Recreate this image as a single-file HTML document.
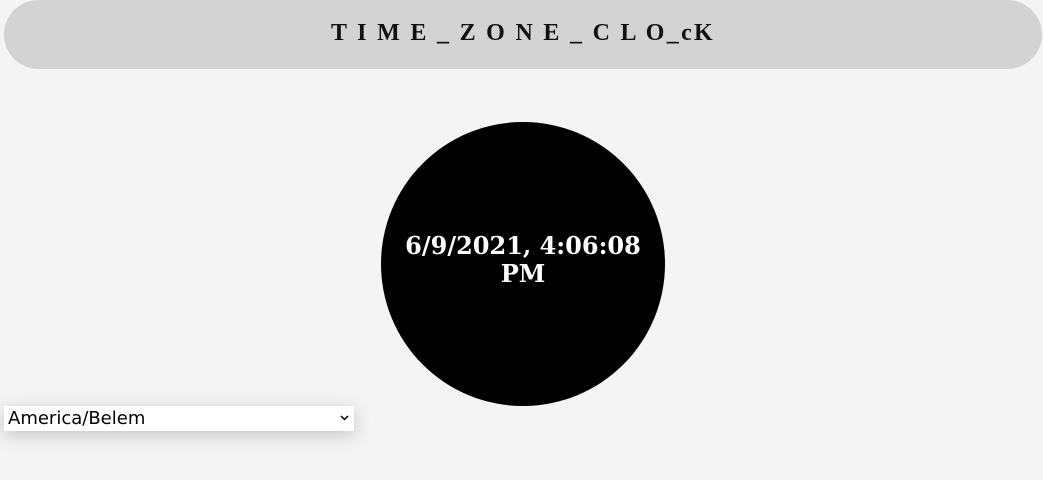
<!DOCTYPE html>
<html><head><style>
html,body{margin:0;padding:0;background:#f4f4f4;width:1043px;height:480px;overflow:hidden}
.hdr{position:absolute;left:4px;top:0;width:1038px;height:69px;border-radius:35px;background:#d3d3d3;text-align:center;line-height:66px;font-family:"Liberation Serif","DejaVu Serif",serif;font-weight:bold;font-size:24px;letter-spacing:2.3px;color:#111;white-space:pre}
.circ{position:absolute;left:381px;top:122px;width:284px;height:284px;border-radius:50%;background:#000;color:#fff;font-family:"DejaVu Serif",serif;font-weight:bold;font-size:24px;text-align:center;box-sizing:border-box;padding-top:110px;line-height:28px}
.sel{position:absolute;left:4px;top:406px;width:350px;height:25px;background:#fff;box-shadow:0 4px 18px rgba(0,0,0,.2);font-family:"DejaVu Sans",sans-serif;font-size:18px;line-height:26px;color:#000}
.sel span{position:absolute;left:4px;top:0}
.sel svg{position:absolute;right:5px;top:9px}
</style></head><body>
<div class="hdr">T I M E _ Z O N E _ C L O_cK</div>
<div class="circ">6/9/2021, 4:06:08<br>PM</div>
<div class="sel"><span>America/Belem</span><svg width="9" height="6" viewBox="0 0 9 6"><path d="M1 1L4.5 4.5L8 1" stroke="#000" stroke-width="1.5" fill="none"/></svg></div>
</body></html>
